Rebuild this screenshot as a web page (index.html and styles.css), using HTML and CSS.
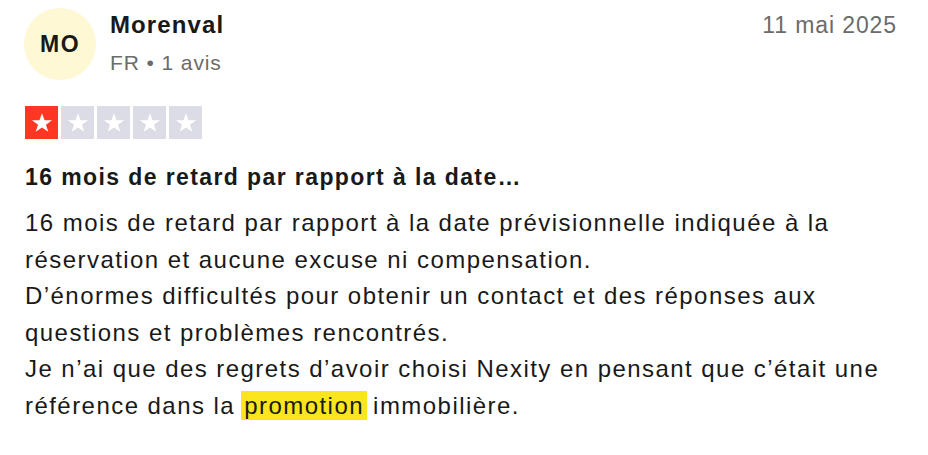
FILE: index.html
```html
<!DOCTYPE html>
<html lang="fr">
<head>
<meta charset="utf-8">
<link rel="stylesheet" href="styles.css">
</head>
<body>
<article class="review">
  <header class="review-header">
    <div class="avatar">MO</div>
    <div class="consumer">
      <div class="name">Morenval</div>
      <div class="info">FR • 1 avis</div>
    </div>
    <time class="date">11 mai 2025</time>
  </header>
  <div class="stars">
    <span class="star on"><svg viewBox="0 0 24 24"><path d="M12 3.6l2.2 6.1h6.4l-5.2 3.8 2 6.1L12 15.8l-5.4 3.8 2-6.1-5.2-3.8h6.4z"/></svg></span>
    <span class="star"><svg viewBox="0 0 24 24"><path d="M12 3.6l2.2 6.1h6.4l-5.2 3.8 2 6.1L12 15.8l-5.4 3.8 2-6.1-5.2-3.8h6.4z"/></svg></span>
    <span class="star"><svg viewBox="0 0 24 24"><path d="M12 3.6l2.2 6.1h6.4l-5.2 3.8 2 6.1L12 15.8l-5.4 3.8 2-6.1-5.2-3.8h6.4z"/></svg></span>
    <span class="star"><svg viewBox="0 0 24 24"><path d="M12 3.6l2.2 6.1h6.4l-5.2 3.8 2 6.1L12 15.8l-5.4 3.8 2-6.1-5.2-3.8h6.4z"/></svg></span>
    <span class="star"><svg viewBox="0 0 24 24"><path d="M12 3.6l2.2 6.1h6.4l-5.2 3.8 2 6.1L12 15.8l-5.4 3.8 2-6.1-5.2-3.8h6.4z"/></svg></span>
  </div>
  <h2 class="title">16 mois de retard par rapport à la date…</h2>
  <p class="text">16 mois de retard par rapport à la date prévisionnelle indiquée à la réservation et aucune excuse ni compensation.<br>D’énormes difficultés pour obtenir un contact et des réponses aux questions et problèmes rencontrés.<br>Je n’ai que des regrets d’avoir choisi Nexity en pensant que c’était une référence dans la <mark class="hl">promotion</mark> immobilière.</p>
</article>
</body>
</html>
```
FILE: styles.css
```css
html, body {
  margin: 0;
  padding: 0;
  background: #ffffff;
}
body {
  font-family: "Liberation Sans", Arial, sans-serif;
  color: #191919;
}
.review {
  padding: 8px 31px 0 25px;
}
.review-header {
  display: flex;
  align-items: flex-start;
}
.avatar {
  width: 72px;
  height: 72px;
  margin-left: -1px;
  border-radius: 50%;
  background: #fef8d4;
  display: flex;
  align-items: center;
  justify-content: center;
  font-weight: bold;
  font-size: 23px;
  letter-spacing: 1.5px;
  color: #191919;
  flex-shrink: 0;
}
.consumer {
  margin-left: 14px;
  margin-top: 2px;
  flex: 1;
}
.name {
  font-size: 24px;
  font-weight: bold;
  line-height: 30px;
  letter-spacing: 1.1px;
}
.info {
  font-size: 21px;
  line-height: 30px;
  margin-top: 8px;
  letter-spacing: 0.9px;
  color: #6b6b6b;
}
.date {
  font-size: 23px;
  line-height: 30px;
  margin-top: 2px;
  letter-spacing: 0.9px;
  color: #6b6b6b;
}
.stars {
  display: flex;
  gap: 3px;
  margin-top: 26px;
}
.star {
  width: 33px;
  height: 33px;
  background: #dcdce6;
  display: flex;
  align-items: center;
  justify-content: center;
}
.star.on {
  background: #ff3722;
}
.star svg {
  width: 28px;
  height: 28px;
  fill: #ffffff;
}
.title {
  font-size: 23px;
  font-weight: bold;
  line-height: 30px;
  letter-spacing: 1.4px;
  margin: 23px 0 0;
}
.text {
  font-size: 24px;
  line-height: 36.6px;
  letter-spacing: 1.45px;
  margin: 13px 0 0;
}
.hl {
  background: #fbe51c;
  color: #191919;
  padding: 1px 3px;
  margin: 0 -2px;
}
```
